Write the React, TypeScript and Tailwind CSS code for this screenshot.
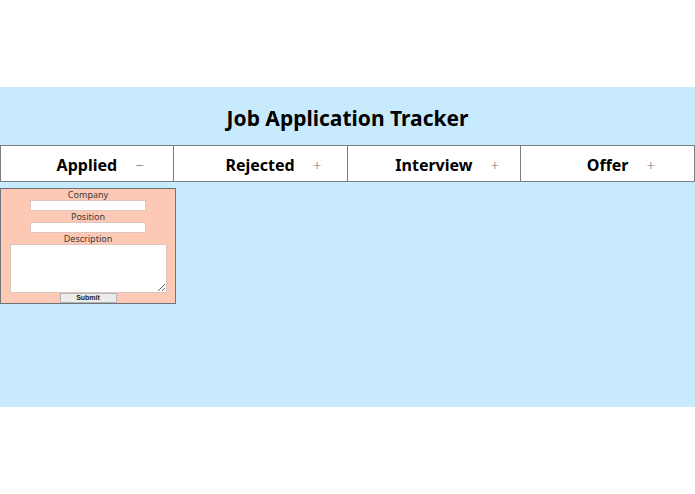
import React from "react";

const columns = [
  { name: "Applied", open: true },
  { name: "Rejected", open: false },
  { name: "Interview", open: false },
  { name: "Offer", open: false },
];

function ApplicationForm() {
  return (
    <form
      className="flex w-[176px] flex-col items-center border border-[#6f7478] bg-[#fdc9b5] pt-[1px] text-[9px] leading-[10px] text-[#3a3a3a]"
      onSubmit={(e) => e.preventDefault()}
    >
      <label className="block h-[10px]">Company</label>
      <input className="block h-[11px] w-[116px] border border-[#dcc6bd] bg-white p-0" />
      <label className="block h-[11px] pt-px">Position</label>
      <input className="block h-[11px] w-[116px] border border-[#dcc6bd] bg-white p-0" />
      <label className="block h-[11px] pt-px">Description</label>
      <textarea className="block h-[49px] w-[157px] resize border border-[#dcc6bd] bg-white p-0" />
      <button
        type="submit"
        className="block h-[10px] w-[57px] border border-[#b5b5b5] bg-[#ececec] p-0 font-['Liberation_Sans',sans-serif] text-[7px] leading-[8px] font-semibold text-[#222]"
      >
        Submit
      </button>
    </form>
  );
}

export default function App() {
  return (
    <div className="h-[494px] bg-white font-['Noto_Sans',sans-serif]">
      <div className="h-[87px]" />
      <div className="h-[320px] bg-[#c8eafd]">
        <div className="flex h-[58px] items-center justify-center pt-[5px]">
          <h1 className="text-[21px] font-bold text-black">Job Application Tracker</h1>
        </div>
        <div className="grid grid-cols-4">
          {columns.map((c, i) => (
            <div
              key={c.name}
              className={`flex h-[37px] items-center justify-center border-y border-[#7a7e82] bg-white pt-[3px] ${
                i === 0 ? "border-x" : "border-r"
              }`}
            >
              <span className="relative text-[16px] font-bold text-black">
                {c.name}
                <span className="absolute top-1/2 left-full ml-[18px] -translate-y-1/2 text-[15px] font-light text-[#777]">
                  {c.open ? "−" : "+"}
                </span>
              </span>
            </div>
          ))}
        </div>
        <div className="mt-[6px]">
          <ApplicationForm />
        </div>
      </div>
    </div>
  );
}
